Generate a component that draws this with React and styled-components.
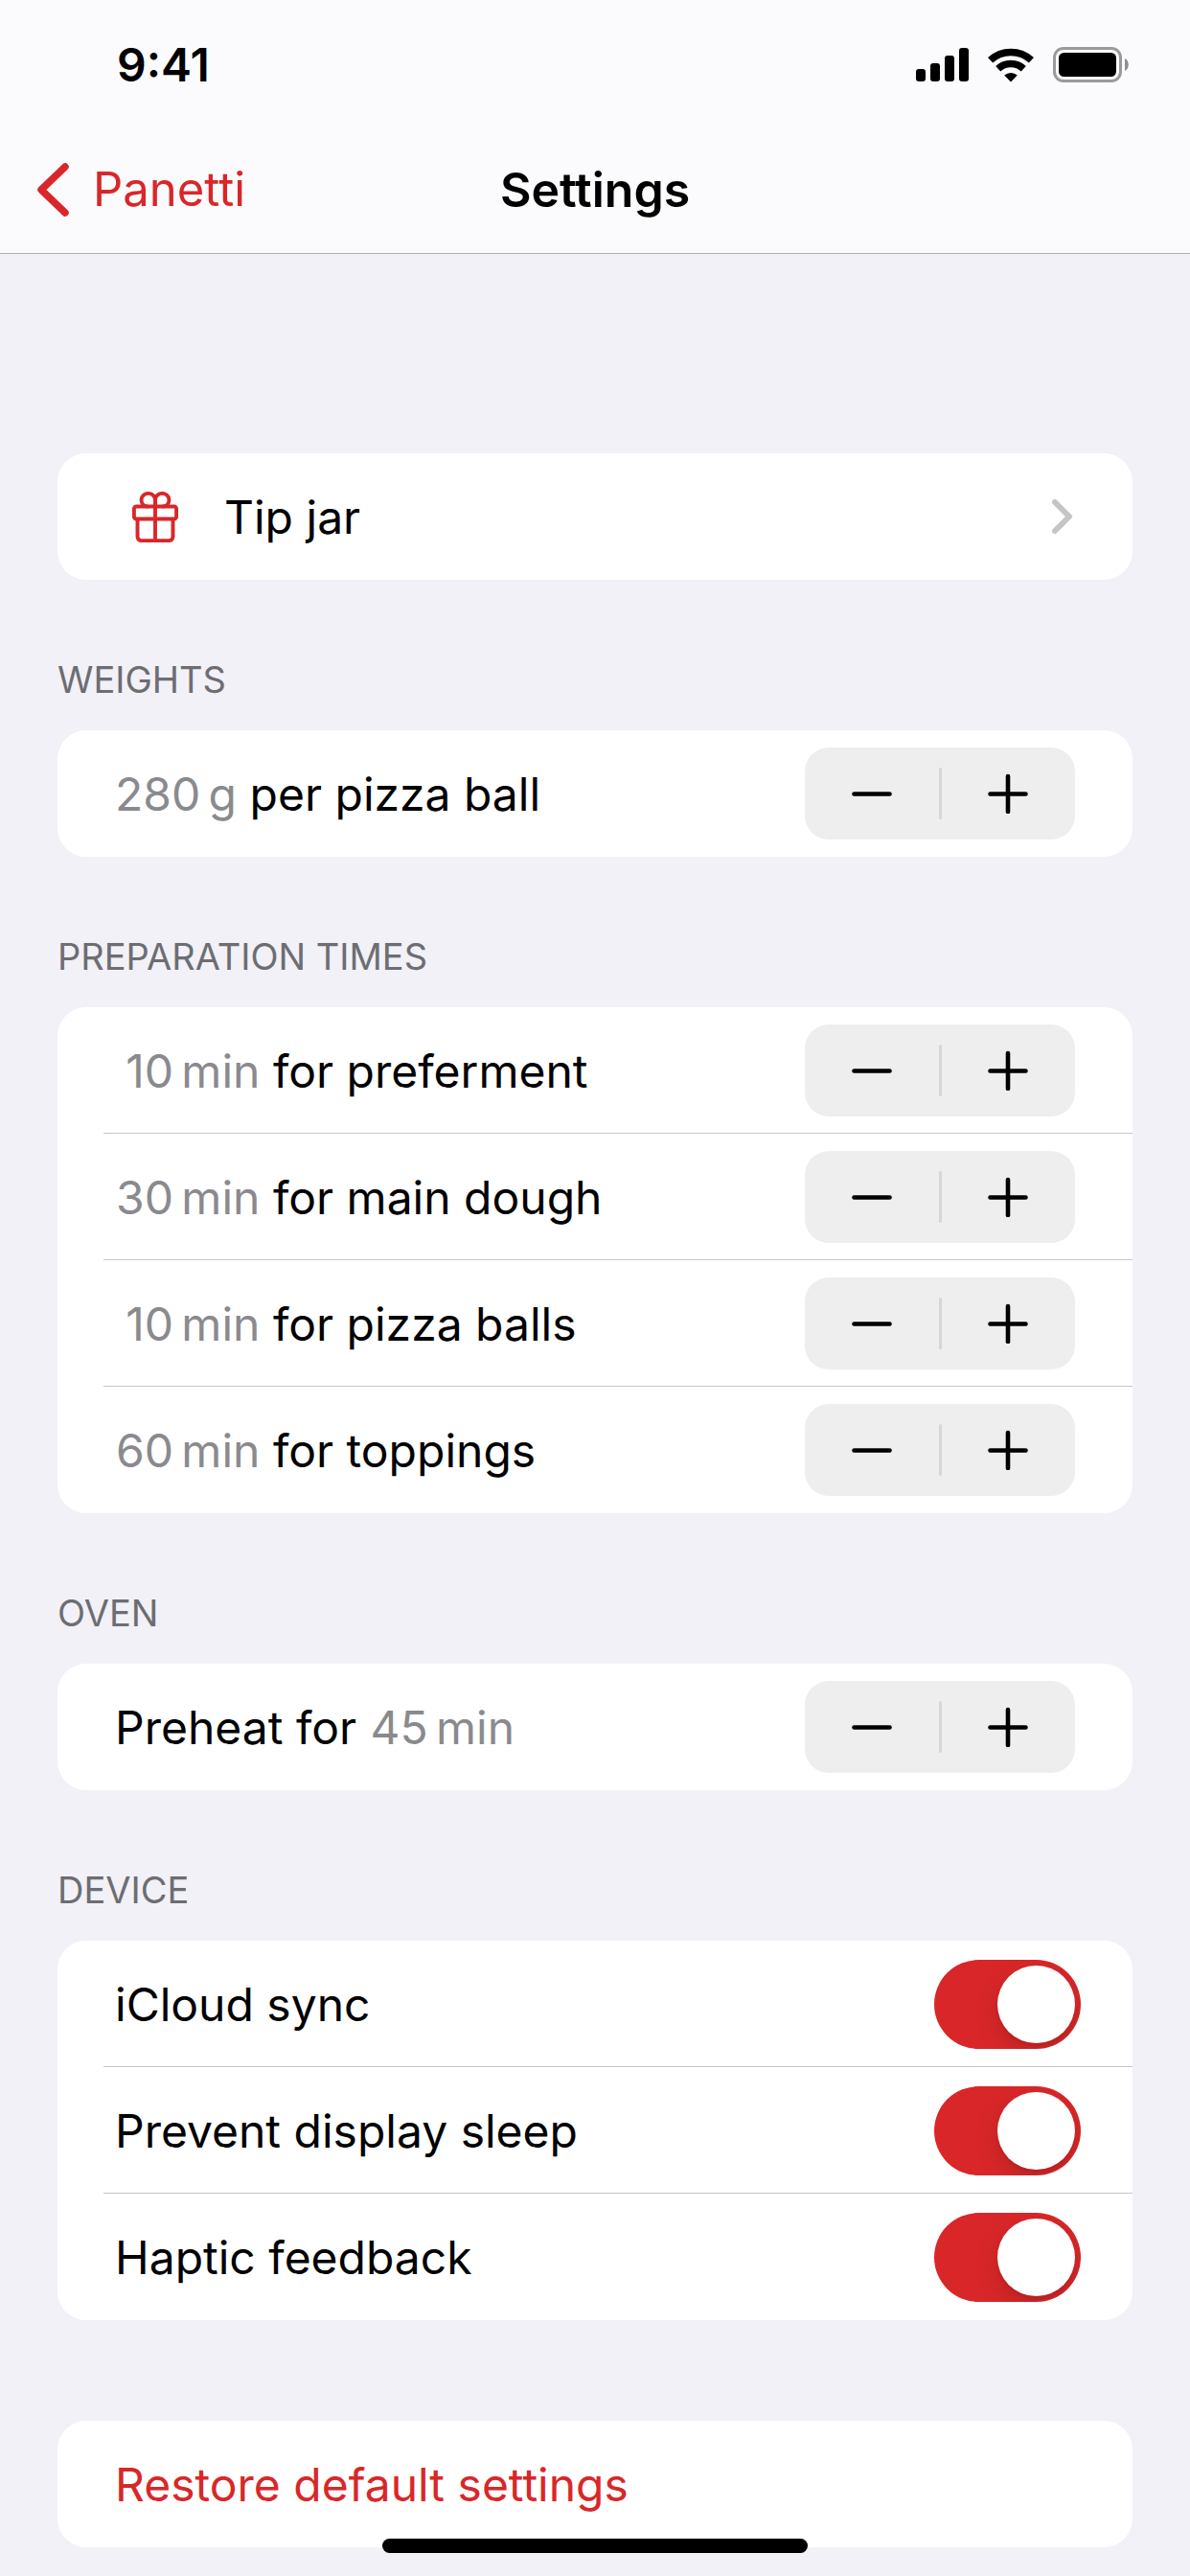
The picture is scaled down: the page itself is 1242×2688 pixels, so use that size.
import React, { useState } from "react";
import styled, { createGlobalStyle } from "styled-components";

const HAIR_SPACE = "\u200A";

const App = () => {
  const [weight, setWeight] = useState(280);
  const [times, setTimes] = useState({ preferment: 10, dough: 30, balls: 10, toppings: 60 });
  const [preheat, setPreheat] = useState(45);

  // Rows of the preparation section, keyed by the state field they change
  const timeRows = [
    { key: "preferment", text: "for preferment" },
    { key: "dough", text: "for main dough" },
    { key: "balls", text: "for pizza balls" },
    { key: "toppings", text: "for toppings" },
  ];

  const changeTime = (key, step) => setTimes({ ...times, [key]: Math.max(0, times[key] + step) });

  return (
    <Screen>
      <GlobalStyle />
      <Header>
        <StatusBar>
          <Time>9:41</Time>
          <StatusIcons>
            <SignalIcon />
            <WifiIcon />
            <BatteryIcon />
          </StatusIcons>
        </StatusBar>
        <NavBar>
          <BackLink href="#panetti">
            <BackIcon />
            Panetti
          </BackLink>
          <Title>Settings</Title>
        </NavBar>
      </Header>

      <Content>
        <Card>
          <LinkRow href="#tip-jar">
            <RowContent>
              <IconSlot><GiftIcon /></IconSlot>
              <Label>Tip jar</Label>
              <ForwardIcon />
            </RowContent>
          </LinkRow>
        </Card>

        <Section>
          <SectionTitle>WEIGHTS</SectionTitle>
          <Card>
            <Row>
              <RowContent>
                <Label><Amount value={weight} unit="g" /> per pizza ball</Label>
                <Stepper name="weight" onStep={(dir) => setWeight(weight + dir * 10)} />
              </RowContent>
            </Row>
          </Card>
        </Section>

        <Section>
          <SectionTitle>PREPARATION TIMES</SectionTitle>
          <Card>
            {timeRows.map(({ key, text }) => (
              <Row key={key}>
                <RowContent>
                  <Label><Amount value={times[key]} unit="min" /> {text}</Label>
                  <Stepper name={`time ${text}`} onStep={(dir) => changeTime(key, dir * 5)} />
                </RowContent>
              </Row>
            ))}
          </Card>
        </Section>

        <Section>
          <SectionTitle>OVEN</SectionTitle>
          <Card>
            <Row>
              <RowContent>
                <Label>Preheat for <Amount value={preheat} unit="min" /></Label>
                <Stepper name="preheat time" onStep={(dir) => setPreheat(Math.max(0, preheat + dir * 5))} />
              </RowContent>
            </Row>
          </Card>
        </Section>

        <Section>
          <SectionTitle>DEVICE</SectionTitle>
          <Card>
            <ToggleRow id="icloud" text="iCloud sync" />
            <ToggleRow id="sleep" text="Prevent display sleep" />
            <ToggleRow id="haptic" text="Haptic feedback" />
          </Card>
        </Section>

        <LastCard>
          <ButtonRow type="button">
            <RowContent>
              <Label>Restore default settings</Label>
            </RowContent>
          </ButtonRow>
        </LastCard>
      </Content>
      <HomeIndicator />
    </Screen>
  );
};

export default App;

const Amount = ({ value, unit }) => (
  <Value><Digits>{value}</Digits>{HAIR_SPACE}{unit}</Value>
);

const Stepper = ({ name, onStep }) => (
  <StepperBox>
    <StepButton type="button" aria-label={`Decrease ${name}`} onClick={() => onStep(-1)}>
      <StepIcon viewBox="0 0 42 42"><path d="M2.5 21.5h37" /></StepIcon>
    </StepButton>
    <StepDivider />
    <StepButton type="button" aria-label={`Increase ${name}`} onClick={() => onStep(1)}>
      <StepIcon viewBox="0 0 42 42"><path d="M2.5 21.5h37M21 3v37" /></StepIcon>
    </StepButton>
  </StepperBox>
);

const ToggleRow = ({ id, text }) => (
  <Row>
    <RowContent $wide>
      <Label as="label" htmlFor={id}>{text}</Label>
      <Toggle type="checkbox" role="switch" id={id} defaultChecked />
    </RowContent>
  </Row>
);

// icons
const SignalIcon = () => (
  <svg width="55" height="35" viewBox="0 0 55 35" aria-hidden="true">
    <rect x="0" y="22" width="10" height="13" rx="3" />
    <rect x="15" y="16" width="10" height="19" rx="3" />
    <rect x="30" y="8" width="10" height="27" rx="3" />
    <rect x="45" y="0" width="10" height="35" rx="3" />
  </svg>
);

const WifiIcon = () => (
  <svg width="48" height="36" viewBox="0 0 48 36" aria-hidden="true">
    <path d="M2.6 12.8A31.8 31.8 0 0 1 45.4 12.8" fill="none" stroke="#000" strokeWidth="7.6" />
    <path d="M10.7 21.7A19.5 19.5 0 0 1 37.3 21.7" fill="none" stroke="#000" strokeWidth="7.4" />
    <path d="M17.2 28.6A10.4 10.4 0 0 1 30.8 28.6L24 35.6Z" />
  </svg>
);

const BatteryIcon = () => (
  <svg width="79" height="37" viewBox="0 0 79 37" aria-hidden="true">
    <rect x="1.5" y="1.5" width="69" height="34" rx="9.5" fill="none" stroke="#9a9a9b" strokeWidth="3" />
    <rect x="6" y="6" width="60" height="25" rx="5.5" />
    <path d="M75 12c5 2 5 11 0 13z" fill="#8e8e8f" />
  </svg>
);

const BackIcon = () => (
  <svg width="36" height="58" viewBox="0 0 36 58" aria-hidden="true">
    <path d="M32 5L7 29l25 24" fill="none" stroke="#d92729" strokeWidth="7.5" strokeLinecap="round" strokeLinejoin="round" />
  </svg>
);

const ForwardIcon = () => (
  <svg width="24" height="36" viewBox="0 0 24 36" aria-hidden="true">
    <path d="M3 3l15 15L3 33" fill="none" stroke="#c5c5c7" strokeWidth="6" strokeLinecap="round" strokeLinejoin="round" />
  </svg>
);

const GiftIcon = () => (
  <svg width="48" height="53" viewBox="0 0 48 53" fill="none" stroke="#d92729" strokeWidth="3.9" aria-hidden="true">
    <rect x="1.9" y="15.5" width="44.2" height="13" rx="2.5" />
    <path d="M5.5 29v17.5q0 4.6 4.6 4.6h27.8q4.6 0 4.6-4.6V29" />
    <path d="M24 15v36" />
    <path d="M24 15V8.5C24 4.5 20.5 1.9 16.8 1.9S9.5 4.5 9.5 8.5S12.5 15.5 16.5 15.5" />
    <path d="M24 15V8.5C24 4.5 27.5 1.9 31.2 1.9S38.5 4.5 38.5 8.5S35.5 15.5 31.5 15.5" />
  </svg>
);

//styling
const GlobalStyle = createGlobalStyle`
  body {
    margin: 0;
    background-color: #f2f1f7;
    color: #000;
    font-family: Inter, "Liberation Sans", sans-serif;
    font-size: 48px;
    line-height: 60px;
  }

  svg {
    display: block;
    flex-shrink: 0;
  }
`;

const Screen = styled.div`
  position: relative;
  min-height: 100vh;
`;

const Header = styled.header`
  background-color: #fbfbfd;
  border-bottom: 1px solid #aeaeb0; // hairline under the bar
`;

const StatusBar = styled.div`
  display: flex;
  align-items: center;
  justify-content: space-between;
  height: 132px;
  padding: 3px 64px 0 122px;
  box-sizing: border-box;
`;

const Time = styled.span`
  font-weight: 600;
`;

const StatusIcons = styled.div`
  display: flex;
  align-items: center;
  gap: 20px;
`;

const NavBar = styled.nav`
  display: grid;
  grid-template-columns: 1fr auto 1fr;
  align-items: center;
  height: 132px;
  padding: 0 36px;
`;

const BackLink = styled.a`
  display: flex;
  align-items: center;
  gap: 25px;
  color: #d92729;
  font-size: 49px;
  text-decoration: none;
`;

const Title = styled.h1`
  margin: 0;
  font-size: 50px;
  font-weight: 600;
`;

const Content = styled.main`
  padding: 208px 60px 30px;
`;

const Section = styled.section`
  padding-top: 78px;
`;

const SectionTitle = styled.h2`
  margin: 0 0 27px;
  color: #6d6d72;
  font-size: 38px;
  font-weight: 400;
  line-height: 52px;
`;

const Card = styled.div`
  overflow: hidden;
  border-radius: 30px;
  background-color: #fff;
`;

const LastCard = styled(Card)`
  margin-top: 105px;
`;

const Row = styled.div`
  padding-left: 48px;

  &:not(:last-child) > div {
    box-shadow: inset 0 -1px #c6c6c8; // separator
  }
`;

const LinkRow = styled(Row).attrs({ as: "a" })`
  display: block;
  color: inherit;
  text-decoration: none;
`;

const ButtonRow = styled(Row).attrs({ as: "button" })`
  display: block;
  width: 100%;
  padding: 0 0 0 48px;
  border: none;
  background: none;
  color: #d92729;
  font: inherit;
  text-align: left;
`;

const RowContent = styled.div`
  display: flex;
  align-items: center;
  min-height: 132px;
  padding: 0 ${(props) => (props.$wide ? 54 : 60)}px 0 12px;
  box-sizing: border-box;
`;

const IconSlot = styled.span`
  display: flex;
  justify-content: center;
  width: 84px;
  margin-right: 30px;
`;

const Label = styled.span`
  flex: 1;
  padding-top: 2px;
`;

const Value = styled.span`
  color: #8a8a8e;
`;

// Keeps the units of two-digit amounts in one column
const Digits = styled.span`
  display: inline-block;
  min-width: 61px;
  margin-right: 4px;
  text-align: right;
`;

const StepperBox = styled.div`
  display: flex;
  align-items: center;
  width: 282px;
  height: 96px;
  border-radius: 25px;
  background-color: #eee;
`;

const StepButton = styled.button`
  display: flex;
  flex: 1;
  align-items: center;
  justify-content: center;
  height: 100%;
  padding: 0;
  border: none;
  background: none;
`;

const StepDivider = styled.span`
  width: 3px;
  height: 54px;
  border-radius: 2px;
  background-color: #d6d6d6;
`;

const StepIcon = styled.svg`
  width: 42px;
  height: 42px;
  fill: none;
  stroke: #000;
  stroke-width: 4.6;
  stroke-linecap: round;
`;

const Toggle = styled.input`
  appearance: none;
  display: flex;
  width: 153px;
  height: 93px;
  margin: 0;
  padding: 6px;
  box-sizing: border-box;
  overflow: hidden;
  border-radius: 47px;
  background-color: #e9e9ea;

  &::before {
    content: "";
    width: 81px;
    height: 81px;
    border-radius: 50%;
    background-color: #fff;
    box-shadow: 0 9px 24px rgba(0, 0, 0, 0.15), 0 3px 3px rgba(0, 0, 0, 0.06);
  }

  &:checked {
    justify-content: flex-end;
    background-color: #d92729;
  }
`;

// Floats over the list, as the system draws it
const HomeIndicator = styled.div`
  position: absolute;
  bottom: 24px;
  left: 50%;
  width: 444px;
  height: 15px;
  margin-left: -222px;
  border-radius: 8px;
  background-color: #000;
`;
